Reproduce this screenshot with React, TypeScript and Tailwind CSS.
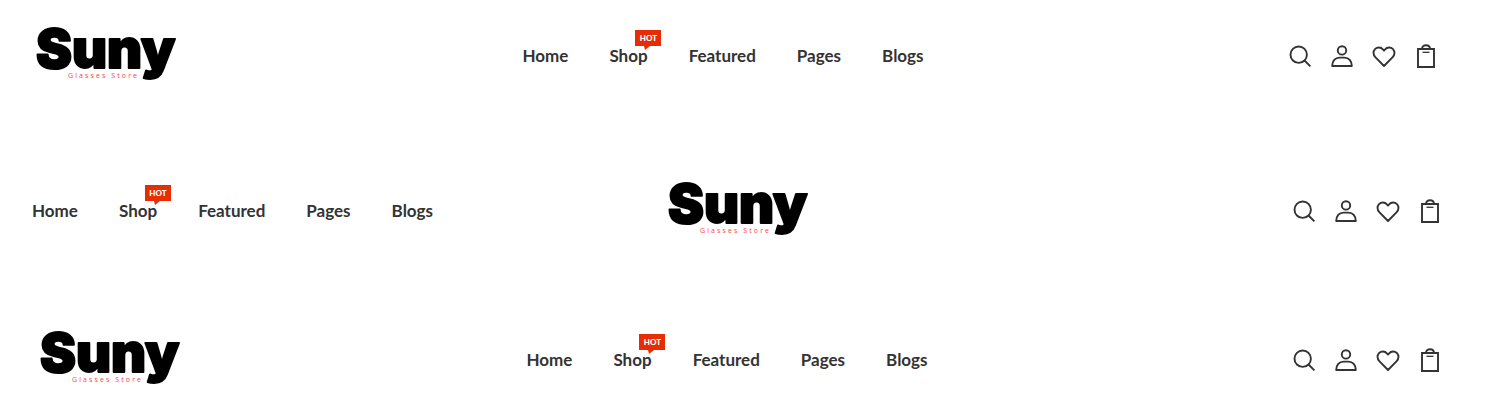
import type { ReactNode } from 'react';
import { clsx } from 'clsx';

interface NavItem {
  label: string;
  href: string;
  hot?: boolean;
}

const navItems: NavItem[] = [
  { label: 'Home', href: '#home' },
  { label: 'Shop', href: '#shop', hot: true },
  { label: 'Featured', href: '#featured' },
  { label: 'Pages', href: '#pages' },
  { label: 'Blogs', href: '#blogs' },
];

function Logo() {
  return (
    <a href="#home" aria-label="Suny Glasses Store" className="block">
      <svg width="138" height="56" viewBox="0 0 138 56" className="overflow-visible">
        <text
          x="0"
          y="41"
          fill="#000"
          stroke="#000"
          strokeWidth="2"
          strokeLinejoin="round"
          className="font-['Inter',sans-serif] text-[54px] font-black"
        >
          Suny
        </text>
        <text x="32" y="51" fill="#ff4040" className="font-['Open_Sans',sans-serif] text-[7px] tracking-[0.3em]">
          Glasses Store
        </text>
      </svg>
    </a>
  );
}

function HotBadge() {
  return (
    <span className="absolute -top-4 left-[26px] flex h-4 w-[26px] items-center justify-center bg-[#e62e05] text-[8px] leading-none font-black text-white">
      HOT
      <svg width="6" height="4" viewBox="0 0 6 4" className="absolute top-full left-[9px]">
        <path d="M0 0h6L1 4z" fill="#e62e05" />
      </svg>
    </span>
  );
}

function Nav() {
  return (
    <nav className="pt-px">
      <ul className="flex gap-[41px]">
        {navItems.map((item) => (
          <li key={item.label}>
            <a href={item.href} className="relative block text-[17px] leading-5 font-bold text-[#333]">
              {item.label}
              {item.hot && <HotBadge />}
            </a>
          </li>
        ))}
      </ul>
    </nav>
  );
}

function IconButton({ label, children }: { label: string; children: ReactNode }) {
  return (
    <button type="button" aria-label={label} className="cursor-pointer text-[#333]">
      <svg width="24" height="24" viewBox="0 0 24 24" fill="none" stroke="currentColor" strokeWidth="1.9">
        {children}
      </svg>
    </button>
  );
}

function Actions() {
  return (
    <div className="flex gap-[18px] pt-0.5">
      <IconButton label="Search">
        <circle cx="10.7" cy="10.7" r="8.2" />
        <path d="M16.5 16.5l5.900 5.900" />
      </IconButton>
      <IconButton label="Account">
        <circle cx="12" cy="6.4" r="4.2" />
        <path d="M2.200 22c0-5 3-8.400 7.300-8.400h5c4.300 0 7.300 3.400 7.300 8.400z" strokeLinejoin="round" />
      </IconButton>
      <IconButton label="Wishlist">
        <path
          d="M12 22L3.300 13.200C1 10.800 1 7.300 3 5.200c2.200-2.300 5.900-2.200 7.900.1L12 6.500l1.100-1.200c2-2.300 5.700-2.400 7.900-.1 2 2.100 2 5.600-.300 8z"
          strokeLinejoin="round"
        />
      </IconButton>
      <IconButton label="Cart">
        <path d="M4 5h16v18H4z" />
        <path d="M8 5C8 2.500 9.700 1.200 12 1.200s4 1.300 4 3.800" />
        <path d="M8.500 8.300h7" strokeWidth="1.300" />
      </IconButton>
    </div>
  );
}

function Header({ left, center, className }: { left: ReactNode; center: ReactNode; className?: string }) {
  return (
    <header className={clsx('grid grid-cols-[1fr_auto_1fr] items-center py-[27px]', className)}>
      <div>{left}</div>
      <div>{center}</div>
      <div className="flex justify-end">
        <Actions />
      </div>
    </header>
  );
}

export default function App() {
  return (
    <main className="bg-white font-['Lato',sans-serif]">
      <Header className="pr-[50px] pl-2" left={<div className="pl-7"><Logo /></div>} center={<Nav />} />
      <Header className="mt-[45px] pr-[46px] pl-8" left={<Nav />} center={<Logo />} />
      <Header className="mt-[39px] pr-[46px] pl-3" left={<div className="pl-7"><Logo /></div>} center={<Nav />} />
    </main>
  );
}
